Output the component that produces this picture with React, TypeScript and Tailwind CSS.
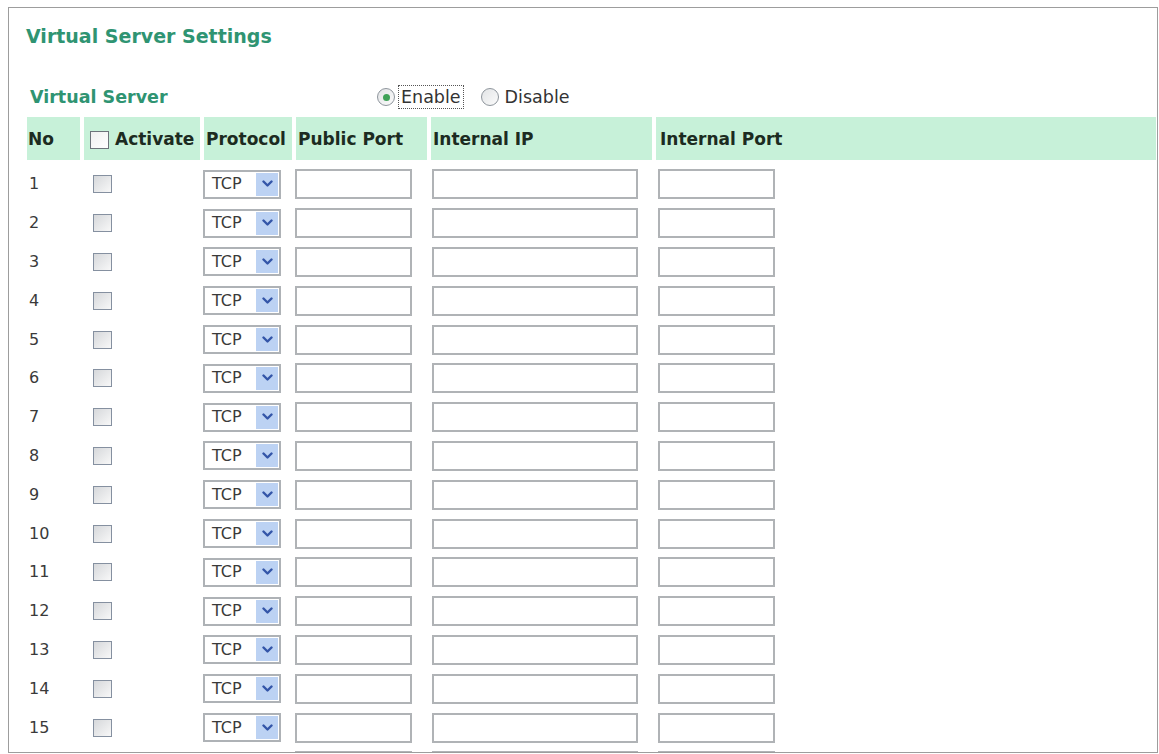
import React from "react";

const font = { fontFamily: '"DejaVu Sans", Verdana, sans-serif' };

function Chevron() {
  return (
    <svg width="11" height="8" viewBox="0 0 11 8">
      <path d="M1.5 1.5 L5.5 5.5 L9.5 1.5" fill="none" stroke="#3355a8" strokeWidth="2.4" strokeLinecap="round" strokeLinejoin="round" />
    </svg>
  );
}

function Select({ label }: { label: string }) {
  return (
    <div className="flex h-[29px] w-[78px] items-stretch border-2 border-[#aeb2b6] bg-white">
      <div className="flex flex-1 items-center pl-[7px] text-[16px] text-[#3a3a3a]">{label}</div>
      <div className="my-[1px] mr-[1px] flex w-[22px] items-center justify-center bg-[#bcd2f3]">
        <Chevron />
      </div>
    </div>
  );
}

function Radio({ checked }: { checked?: boolean }) {
  return (
    <span className="flex h-[18px] w-[18px] items-center justify-center rounded-full border-[1.5px] border-[#8e959c] bg-linear-to-br from-[#e2e4e6] to-[#fbfbfb]">
      {checked && <span className="h-[7px] w-[7px] rounded-full bg-[#3fa257]" />}
    </span>
  );
}

export default function App() {
  const rows = Array.from({ length: 16 }, (_, i) => i + 1);
  return (
    <div className="h-[754px] overflow-hidden bg-white pl-[8px] pr-[1px] pt-[7px]" style={font}>
      <div className="h-[746px] overflow-hidden border border-[#9d9d9d]">
        <div className="ml-[17px] mt-[17px] h-[22px] text-[19px] font-bold leading-[22px] text-[#2f9472]">
          Virtual Server Settings
        </div>
        <div className="mt-[37px] flex h-[26px] items-center">
          <div className="ml-[21px] w-[347px] text-[17.5px] font-bold text-[#2f9472]">Virtual Server</div>
          <Radio checked />
          <span className="ml-[3px] border border-dotted border-[#555] px-[2px] text-[17.5px] leading-[22px] text-[#333]">
            Enable
          </span>
          <span className="ml-[17px]">
            <Radio />
          </span>
          <span className="ml-[6px] text-[17.5px] text-[#333]">Disable</span>
        </div>
        <div className="ml-[18px] mr-[1px] mt-[7px] grid grid-cols-[53px_116px_88px_131px_221px_1fr] gap-x-[4px]">
          <div className="flex h-[43px] items-center bg-[#c7f1d9] pl-[1px] pt-[3px] text-[17px] font-bold text-[#1c2b21]">No</div>
          <div className="flex h-[43px] items-center bg-[#c7f1d9] pl-[6px] pt-[3px] text-[17px] font-bold text-[#1c2b21]">
            <span className="mr-[6px] h-[18px] w-[19px] border-[1.5px] border-[#6d747b] bg-linear-to-br from-[#f0f0f0] to-white" />
            Activate
          </div>
          <div className="flex h-[43px] items-center bg-[#c7f1d9] pl-[2px] pt-[3px] text-[17px] font-bold text-[#1c2b21]">Protocol</div>
          <div className="flex h-[43px] items-center bg-[#c7f1d9] pl-[2px] pt-[3px] text-[17px] font-bold text-[#1c2b21]">Public Port</div>
          <div className="flex h-[43px] items-center bg-[#c7f1d9] pl-[2px] pt-[3px] text-[17px] font-bold text-[#1c2b21]">Internal IP</div>
          <div className="flex h-[43px] items-center bg-[#c7f1d9] pl-[4px] pt-[3px] text-[17px] font-bold text-[#1c2b21]">Internal Port</div>
        </div>
        <div className="ml-[18px] mr-[1px] mt-[5px] flex flex-col">
          {rows.map((n) => {
            const partial = n === 16;
            return (
              <div key={n} className="grid h-[38.8px] shrink-0 grid-cols-[53px_116px_88px_131px_221px_1fr] items-center gap-x-[4px]">
                <div className="pl-[2px] text-[16px] text-[#3a3a3a]">{partial ? "" : n}</div>
                <div className="pl-[9px]">
                  <span className="block h-[18px] w-[19px] border-[1.5px] border-[#8590a0] bg-linear-to-br from-[#d6d8db] to-[#f8f8f8]" />
                </div>
                <div className="-ml-[1px]">
                  <Select label={partial ? "" : "TCP"} />
                </div>
                <div className="-ml-[1px]">
                  <input type="text" className="block h-[30px] w-[117px] border-2 border-[#b0b3b6] bg-white outline-none" />
                </div>
                <div className="ml-[1px]">
                  <input type="text" className="block h-[30px] w-[206px] border-2 border-[#b0b3b6] bg-white outline-none" />
                </div>
                <div className="ml-[2px]">
                  <input type="text" className="block h-[30px] w-[117px] border-2 border-[#b0b3b6] bg-white outline-none" />
                </div>
              </div>
            );
          })}
        </div>
      </div>
    </div>
  );
}
